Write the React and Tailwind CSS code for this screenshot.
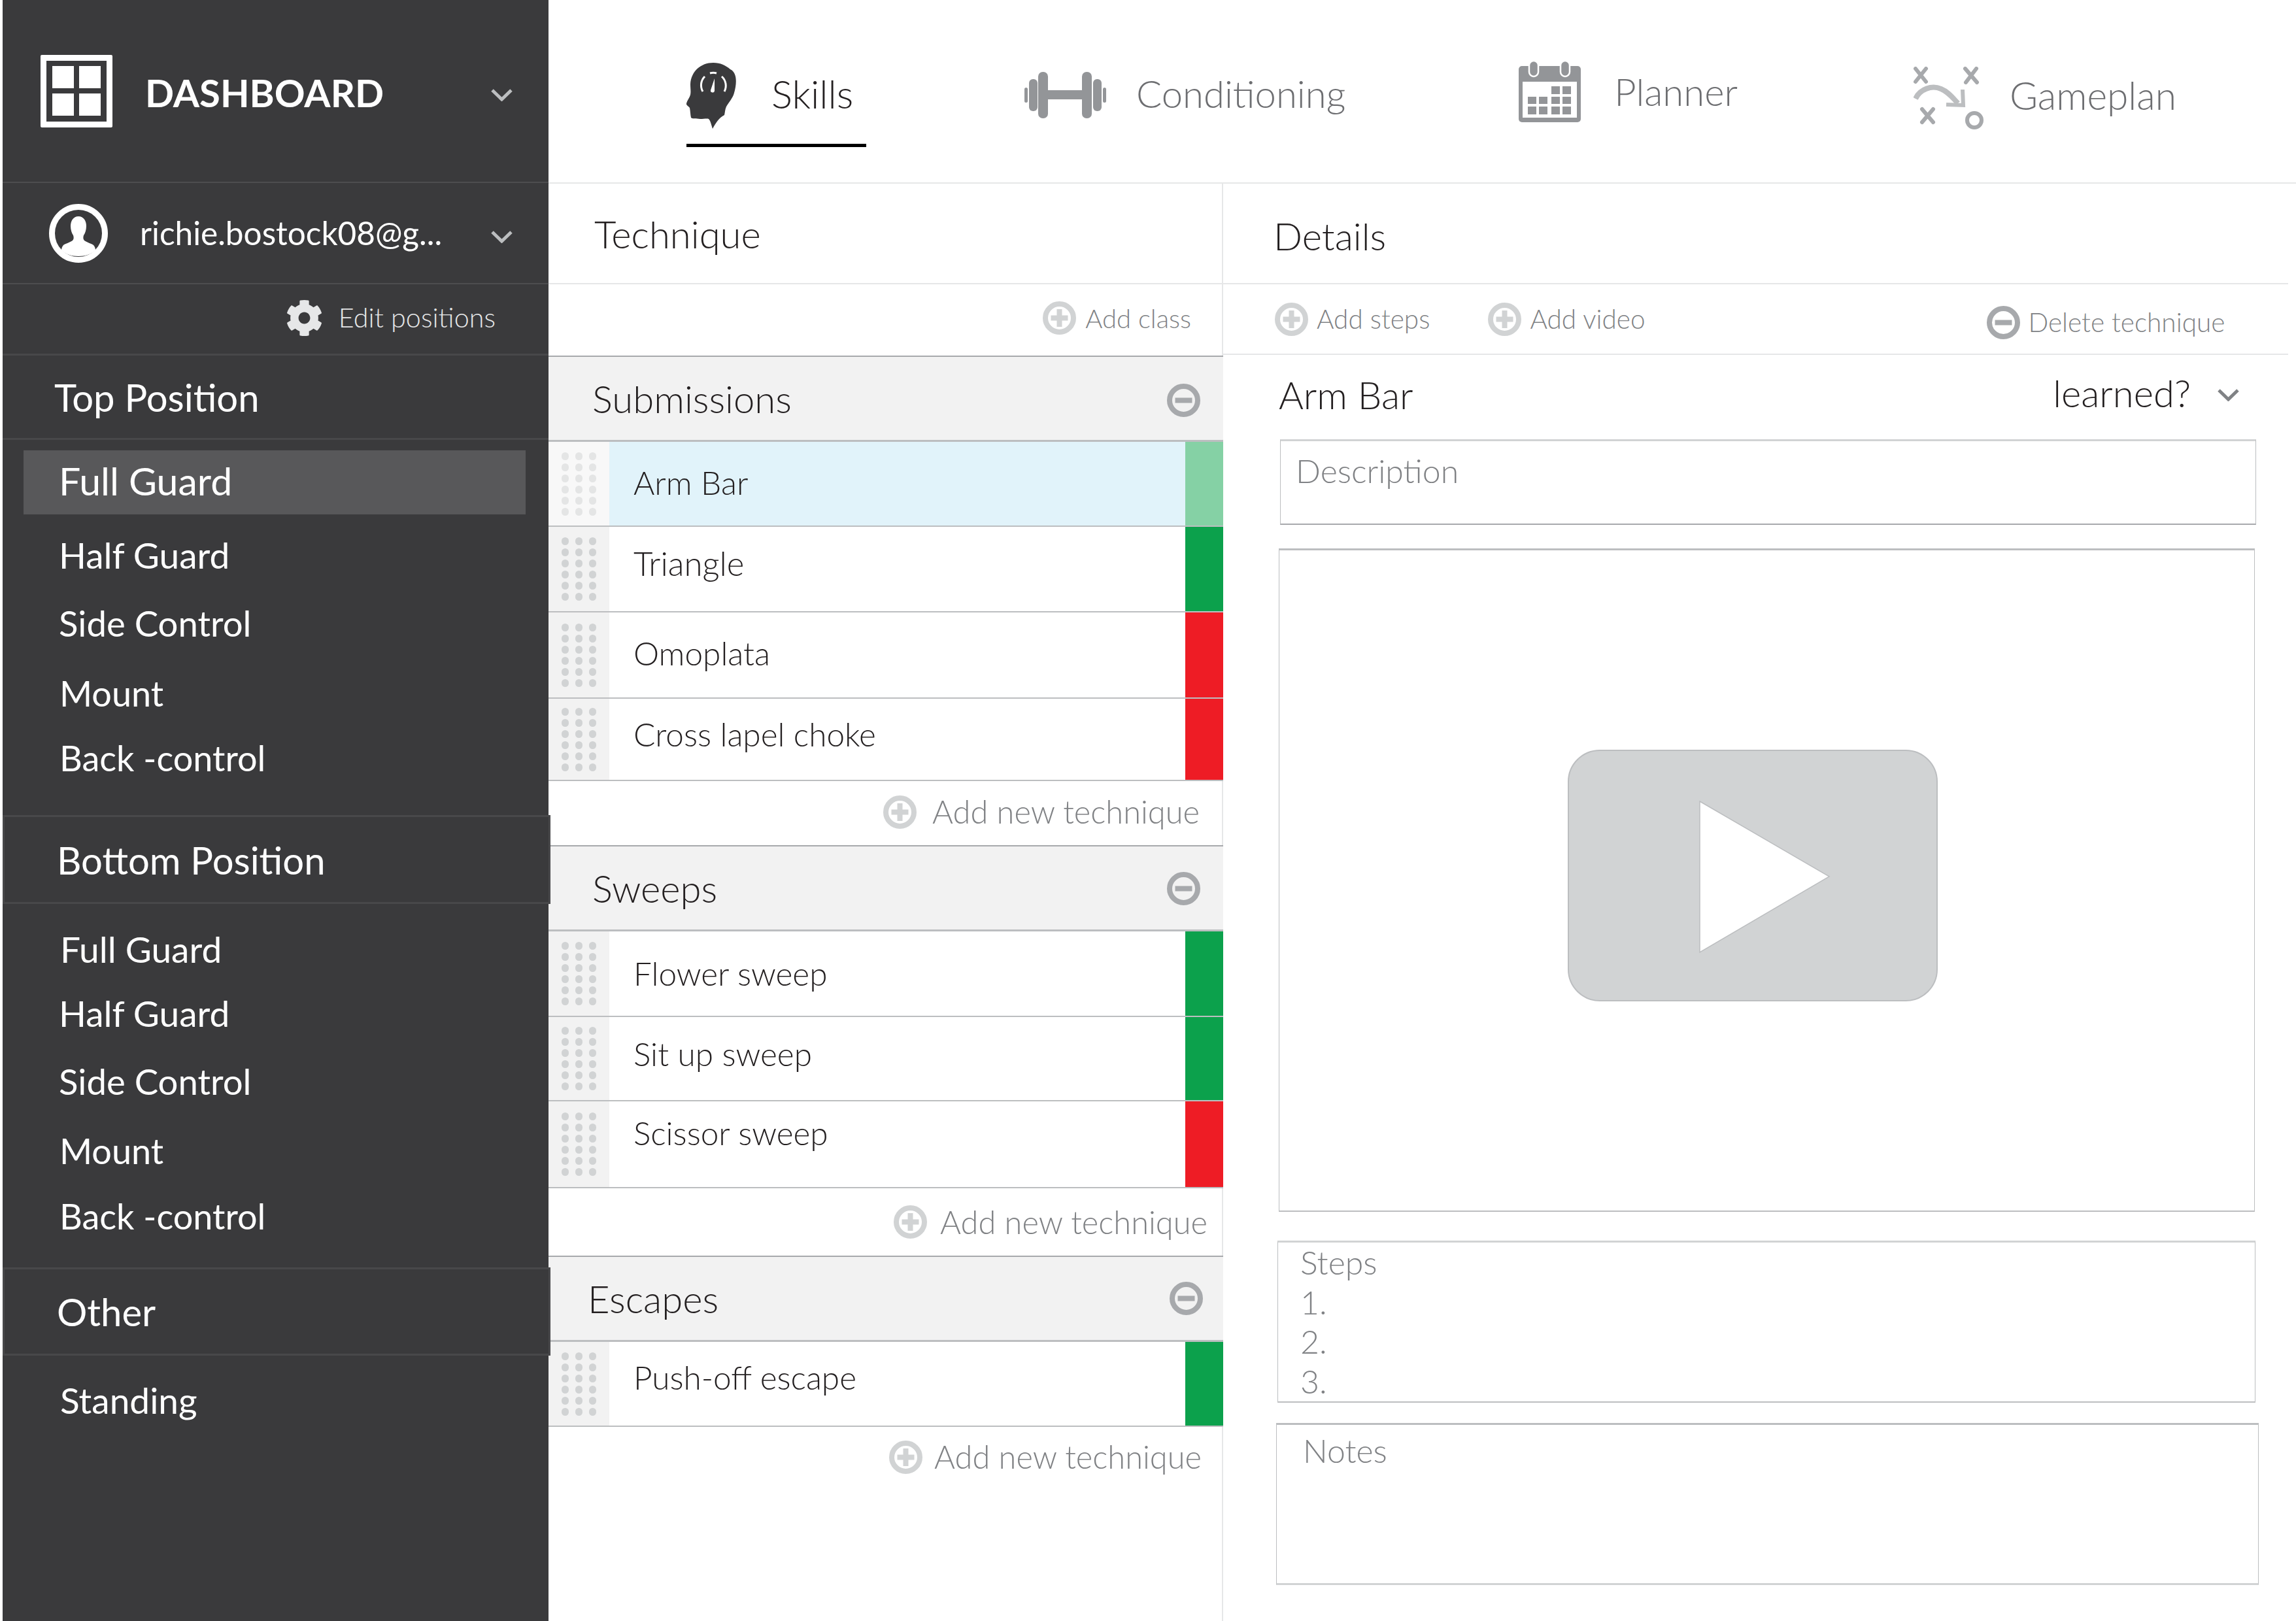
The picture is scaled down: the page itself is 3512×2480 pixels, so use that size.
import { FaCog } from 'react-icons/fa'

const topItems = [
  { label: 'Full Guard', cls: 'mt-[16px] h-[98px] ml-[32px] mr-[35px] pl-[54px] pb-[3px] bg-[#58585a] text-[59px]' },
  { label: 'Half Guard', cls: 'mt-[17px] h-[90px] pl-[86px] text-[55px]' },
  { label: 'Side Control', cls: 'mt-[15px] h-[90px] pl-[86px] text-[54.5px]' },
  { label: 'Mount', cls: 'mt-[16px] h-[90px] pl-[87px] text-[54px]' },
  { label: 'Back -control', cls: 'mt-[9px] h-[90px] pl-[87px] text-[54px]' },
]

const bottomItems = [
  { label: 'Full Guard', cls: 'mt-[24px] h-[90px] pl-[88px] text-[55px]' },
  { label: 'Half Guard', cls: 'mt-[8px] h-[90px] pl-[86px] text-[55px]' },
  { label: 'Side Control', cls: 'mt-[15px] h-[90px] pl-[86px] text-[54.5px]' },
  { label: 'Mount', cls: 'mt-[15px] h-[90px] pl-[87px] text-[54px]' },
  { label: 'Back -control', cls: 'mt-[10px] h-[90px] pl-[87px] text-[54px]' },
]

const GREEN = 'bg-[#0ca14c]'
const RED = 'bg-[#ee1c25]'

const sections = [
  {
    title: 'Submissions',
    headCls: 'pl-[67px] pr-[35px]',
    minusCls: 'mt-[6px]',
    addCls: 'h-[98px] pr-[36px] pb-[4px]',
    addGap: 'ml-[24px]',
    rows: [
      { label: 'Arm Bar', h: 'h-[130px]', text: 'pb-[4px]', bar: 'bg-[#85d1a5]', active: true },
      { label: 'Triangle', h: 'h-[131px]', text: 'pb-[16px] text-[51px]', bar: GREEN },
      { label: 'Omoplata', h: 'h-[132px]', text: 'pb-[6px]', bar: RED },
      { label: 'Cross lapel choke', h: 'h-[126px]', text: 'pb-[16px]', bar: RED },
    ],
  },
  {
    title: 'Sweeps',
    headCls: 'pl-[67px] pr-[35px]',
    minusCls: 'mt-[2px]',
    addCls: 'h-[103px] pr-[24px]',
    addGap: 'ml-[20px]',
    rows: [
      { label: 'Flower sweep', h: 'h-[131px]', text: 'pb-[0px]', bar: GREEN },
      { label: 'Sit up sweep', h: 'h-[129px]', text: 'pb-[14px]', bar: GREEN },
      { label: 'Scissor sweep', h: 'h-[133px]', text: 'pb-[34px]', bar: RED },
    ],
  },
  {
    title: 'Escapes',
    headCls: 'pl-[60px] pr-[31px]',
    minusCls: '',
    addCls: 'h-[98px] pr-[33px] pb-[6px]',
    addGap: 'ml-[18px]',
    rows: [{ label: 'Push-off escape', h: 'h-[130px]', text: 'pb-[20px]', bar: GREEN }],
  },
]

function Chevron({ className = '', color = '#bcbec0' }) {
  return (
    <svg viewBox="0 0 33 20" className={`h-[20px] w-[33px] ${className}`} fill="none">
      <path d="M2 3 L16.5 17 L31 3" stroke={color} strokeWidth="5" />
    </svg>
  )
}

function DashIcon() {
  return (
    <svg viewBox="0 0 110 111" className="h-[111px] w-[110px] shrink-0">
      <rect x="0" y="0" width="110" height="111" rx="2" fill="#fff" />
      <rect x="9" y="9" width="92" height="93" fill="#3a3a3c" />
      <rect x="18" y="17" width="33" height="34" fill="#fff" />
      <rect x="59" y="17" width="33" height="34" fill="#fff" />
      <rect x="18" y="59" width="33" height="34" fill="#fff" />
      <rect x="59" y="59" width="33" height="34" fill="#fff" />
    </svg>
  )
}

function UserIcon() {
  return (
    <svg viewBox="0 0 90 90" className="h-[90px] w-[90px] shrink-0">
      <circle cx="45" cy="45" r="40.5" fill="none" stroke="#fff" strokeWidth="9" />
      <path
        d="M45 19c-8 0-12 7-12 15 0 6 2 11 4 14 1 3 1 6-1 8-4 3-12 5-14 7-2 2-3 5-3 8 7 6 15 9 26 9s19-3 26-9c0-3-1-6-3-8-2-2-10-4-14-7-2-2-2-5-1-8 2-3 4-8 4-14 0-8-4-15-12-15z"
        fill="#fff"
      />
    </svg>
  )
}

function HeadIcon() {
  return (
    <svg viewBox="0 0 82 101" className="h-[101px] w-[82px] shrink-0">
      <path
        d="M41 0C22 0 7 13 6 33c0 6 1 11 0 16-1 4-5 9-6 13-1 3 3 4 5 7 1 5 1 11 2 15 1 2 8 1 14 2 5 0 11-1 13 0 3 3 4 9 6 15 4-8 10-17 18-21 1-4 1-9 3-13 4-7 10-13 12-21 4-14 5-31-6-36C60 4 52 0 41 0z"
        fill="#3a3a3c"
      />
      <path d="M25 44a19 19 0 0 1 3 -23" fill="none" stroke="#fff" strokeWidth="3" />
      <path d="M36 16a19 19 0 0 1 10 0" fill="none" stroke="#fff" strokeWidth="3" />
      <path d="M54 21a19 19 0 0 1 4 23" fill="none" stroke="#fff" strokeWidth="3" />
      <path d="M43 24 L37 42 A3 3 0 0 0 43 43 Z" fill="#fff" />
    </svg>
  )
}

function DumbbellIcon() {
  return (
    <svg viewBox="0 0 125 71" className="h-[71px] w-[125px] shrink-0" fill="#939598">
      <rect x="0" y="24" width="5" height="23" rx="2.5" />
      <rect x="7" y="11" width="13" height="49" rx="6" />
      <rect x="21" y="0" width="15" height="71" rx="7" />
      <rect x="35" y="28" width="54" height="14" />
      <rect x="88" y="0" width="15" height="71" rx="7" />
      <rect x="105" y="11" width="13" height="49" rx="6" />
      <rect x="120" y="24" width="5" height="23" rx="2.5" />
    </svg>
  )
}

function CalendarIcon() {
  const row1 = [50, 67]
  const rows = [14, 31, 50, 67]
  return (
    <svg viewBox="0 0 95 94" className="h-[94px] w-[95px] shrink-0">
      <rect x="0" y="8" width="95" height="86" rx="5" fill="#939598" />
      <rect x="6" y="32" width="83" height="55" fill="#fff" />
      <rect x="16" y="0" width="14" height="24" rx="7" fill="#939598" stroke="#fff" strokeWidth="2.5" />
      <rect x="64" y="0" width="14" height="24" rx="7" fill="#939598" stroke="#fff" strokeWidth="2.5" />
      {row1.map((x) => (
        <rect key={x} x={x} y="39" width="13" height="12" fill="#939598" />
      ))}
      {rows.map((x) => (
        <rect key={`a${x}`} x={x} y="55" width="13" height="11" fill="#939598" />
      ))}
      {rows.map((x) => (
        <rect key={`b${x}`} x={x} y="70" width="13" height="12" fill="#939598" />
      ))}
    </svg>
  )
}

function GameplanIcon() {
  return (
    <svg viewBox="0 0 108 98" className="h-[98px] w-[108px] shrink-0" fill="none">
      <g stroke="#a7a9ac" strokeWidth="6" strokeLinecap="round">
        <path d="M3 3 L19 23 M19 3 L3 23" />
        <path d="M80 24 L96 3 M79 3 L97 24" />
        <path d="M13 85 L30 65 M13 65 L30 85" />
      </g>
      <circle cx="93" cy="82" r="11" stroke="#a7a9ac" strokeWidth="6" />
      <path d="M3 49 C10 34 28 28 42 34 C54 39 60 48 68 56" stroke="#bcbec0" strokeWidth="8" />
      <path d="M50 58 L76 59 L75 35" stroke="#bcbec0" strokeWidth="6" />
    </svg>
  )
}

function PlusCircle({ className = 'h-[51px] w-[51px]' }) {
  return (
    <svg viewBox="0 0 51 51" className={`shrink-0 ${className}`}>
      <circle cx="25.5" cy="25.5" r="21.5" fill="none" stroke="#d1d3d4" strokeWidth="8" />
      <path d="M21.5 12h8v9.5h9v8h-9v9.5h-8v-9.5h-9v-8h9z" fill="#d1d3d4" />
    </svg>
  )
}

function MinusCircle({ className = 'h-[51px] w-[51px]' }) {
  return (
    <svg viewBox="0 0 51 51" className={`shrink-0 ${className}`}>
      <circle cx="25.5" cy="25.5" r="21.5" fill="none" stroke="#a7a9ac" strokeWidth="8" />
      <rect x="12.5" y="21.5" width="26" height="8" fill="#a7a9ac" />
    </svg>
  )
}

function Dots({ faded }) {
  return (
    <div className={`grid grid-cols-3 gap-x-[10px] gap-y-[5px] ${faded ? 'opacity-50' : ''}`}>
      {Array.from({ length: 18 }).map((_, i) => (
        <span key={i} className="h-[12px] w-[11px] rounded-full bg-[#d1d3d4]" />
      ))}
    </div>
  )
}

function TechniqueRow({ row }) {
  return (
    <div className={`flex border-b-2 border-[#bcbec0] ${row.h} ${row.active ? 'bg-[#e1f3fa]' : 'bg-white'}`}>
      <div className={`flex w-[93px] shrink-0 items-center justify-center ${row.active ? 'bg-[#f8f8f8]' : 'bg-[#f2f2f2]'}`}>
        <Dots faded={row.active} />
      </div>
      <div className={`flex flex-1 items-center pl-[37px] text-[49.5px] font-light text-[#231f20] ${row.text}`}>
        {row.label}
      </div>
      <div className={`w-[58px] shrink-0 ${row.bar}`} />
    </div>
  )
}

function Section({ section }) {
  return (
    <div className="-mr-[2px]">
      <div className={`flex h-[132px] items-center justify-between border-t-2 border-b-[3px] border-t-[#a7a9ac] border-b-[#bcbec0] bg-[#f2f2f2] ${section.headCls}`}>
        <span className="text-[58px] font-light text-[#231f20]">{section.title}</span>
        <MinusCircle className={`h-[51px] w-[51px] ${section.minusCls}`} />
      </div>
      {section.rows.map((row) => (
        <TechniqueRow key={row.label} row={row} />
      ))}
      <div className={`flex items-center justify-end ${section.addCls}`}>
        <PlusCircle />
        <span className={`text-[48.8px] font-light text-[#808285] ${section.addGap}`}>Add new technique</span>
      </div>
    </div>
  )
}

function SideList({ items }) {
  return (
    <div>
      {items.map((item) => (
        <div key={item.label} className={`flex items-center text-white ${item.cls}`}>
          {item.label}
        </div>
      ))}
    </div>
  )
}

function Sidebar() {
  return (
    <aside className="h-full w-[835px] shrink-0 bg-[#3a3a3c]">
      <div className="flex h-[280px] items-center border-b-2 border-[#4d4d4f] pr-[55px] pl-[58px]">
        <DashIcon />
        <span className="mt-[4px] ml-[50px] text-[58px] font-bold text-white">DASHBOARD</span>
        <Chevron className="mt-[12px] ml-auto" />
      </div>
      <div className="flex h-[155px] items-center border-b-2 border-[#4d4d4f] pr-[55px] pl-[71px]">
        <UserIcon />
        <span className="ml-[49px] text-[49.5px] text-white">richie.bostock08@g...</span>
        <Chevron className="mt-[10px] ml-auto" />
      </div>
      <div className="flex h-[106px] items-center justify-end pr-[81px] pb-[4px]">
        <FaCog className="mr-[24px] h-[57px] w-[57px] text-[#e6e7e8]" />
        <span className="text-[41.3px] font-light text-[#e6e7e8]">Edit positions</span>
      </div>
      <div className="flex h-[132px] items-center border-y-[3px] border-[#48484a] pl-[79px] text-[58px] text-white">
        Top Position
      </div>
      <SideList items={topItems} />
      <div className="relative z-10 mt-[43px] flex h-[136px] w-[838px] items-center border-[3px] border-[#48484a] bg-[#3a3a3c] pl-[80px] text-[58px] text-white">
        Bottom Position
      </div>
      <SideList items={bottomItems} />
      <div className="relative z-10 mt-[34px] flex h-[135px] w-[838px] items-center border-[3px] border-[#48484a] bg-[#3a3a3c] pl-[80px] text-[58px] text-white">
        Other
      </div>
      <SideList items={[{ label: 'Standing', cls: 'mt-[23px] h-[90px] pl-[88px] text-[55px]' }]} />
    </aside>
  )
}

function TopNav() {
  return (
    <nav className="flex h-[281px] shrink-0 border-b-2 border-[#e6e7e8] pl-[211px]">
      <div className="w-[275px]">
        <div className="mt-[96px] flex h-[101px] items-center">
          <HeadIcon />
          <span className="mb-[8px] ml-[48px] text-[60px] font-light text-[#231f20]">Skills</span>
        </div>
        <div className="mt-[23px] h-[5px] bg-black" />
      </div>
      <div className="mt-[110px] ml-[242px] flex h-[71px] items-center">
        <DumbbellIcon />
        <span className="mb-[6px] ml-[46px] text-[58px] font-light text-[#6d6e71]">Conditioning</span>
      </div>
      <div className="mt-[93px] ml-[265px] flex h-[94px] items-center">
        <CalendarIcon />
        <span className="mb-[2px] ml-[51px] text-[58px] font-light text-[#6d6e71]">Planner</span>
      </div>
      <div className="mt-[102px] ml-[269px] flex h-[98px] items-center">
        <GameplanIcon />
        <span className="mb-[10px] ml-[39px] text-[58.7px] font-light text-[#6d6e71]">Gameplan</span>
      </div>
    </nav>
  )
}

function TechniqueColumn() {
  return (
    <section className="w-[1032px] shrink-0 border-r-2 border-[#e6e7e8]">
      <div className="flex h-[154px] items-center border-b-2 border-[#e6e7e8] pl-[70px] text-[58px] font-light text-[#231f20]">
        Technique
      </div>
      <div className="flex h-[109px] items-center justify-end pr-[47px] pb-[6px]">
        <PlusCircle />
        <span className="ml-[14px] text-[40px] font-light text-[#808285]">Add class</span>
      </div>
      {sections.map((section) => (
        <Section key={section.title} section={section} />
      ))}
    </section>
  )
}

function DetailsColumn() {
  return (
    <section className="w-[1629px] shrink-0">
      <div className="flex h-[154px] items-center border-b-2 border-[#e6e7e8] pt-[6px] pl-[77px] text-[58px] font-light text-[#231f20]">
        Details
      </div>
      <div className="flex h-[108px] items-center border-b-2 border-[#e6e7e8] pl-[79px] text-[40.5px] font-light text-[#808285]">
        <PlusCircle />
        <span className="ml-[13px]">Add steps</span>
        <PlusCircle className="ml-[89px] h-[51px] w-[51px]" />
        <span className="ml-[13px]">Add video</span>
        <MinusCircle className="mt-[10px] ml-[522px] h-[51px] w-[51px]" />
        <span className="mt-[10px] ml-[13px]">Delete technique</span>
      </div>
      <div className="flex h-[129px] items-center justify-between pr-[75px] pb-[8px] pl-[85px] text-[58px] font-light text-[#231f20]">
        <span>Arm Bar</span>
        <div className="flex items-center">
          <span className="mb-[6px]">learned?</span>
          <Chevron className="ml-[41px]" color="#808285" />
        </div>
      </div>
      <div className="ml-[87px] h-[131px] w-[1493px] border border-t-[3px] border-b-2 border-[#bcbec0] border-t-[#d1d3d4] border-b-[#a7a9ac] pt-[8px] pl-[23px] text-[50px] font-light text-[#808285]">
        Description
      </div>
      <div className="mt-[36px] ml-[85px] flex h-[1015px] w-[1493px] items-start justify-center border border-t-[3px] border-b-2 border-[#bcbec0] border-t-[#bcbec0] pt-[305px]">
        <svg viewBox="0 0 566 385" className="-ml-[44px] h-[385px] w-[566px]">
          <rect x="1" y="1" width="564" height="383" rx="48" fill="#d1d3d4" stroke="#bcbec0" strokeWidth="2" />
          <path d="M202 79 L400 194 L202 310 Z" fill="#fff" stroke="#bcbec0" strokeWidth="1.5" />
        </svg>
      </div>
      <div className="mt-[44px] ml-[83px] h-[248px] w-[1496px] border border-t-[3px] border-b-2 border-[#bcbec0] border-t-[#d1d3d4] pl-[34px] text-[50px] leading-[60.5px] font-light text-[#808285]">
        <div>Steps</div>
        <div>1.</div>
        <div>2.</div>
        <div>3.</div>
      </div>
      <div className="mt-[31px] ml-[81px] h-[248px] w-[1503px] border border-t-[3px] border-b-[3px] border-[#bcbec0] border-b-[#d1d3d4] pt-[2px] pl-[40px] text-[50px] font-light text-[#808285]">
        Notes
      </div>
    </section>
  )
}

export default function App() {
  return (
    <div className="flex h-[2480px] w-[3512px] overflow-hidden bg-white pl-[4px] font-['Lato',sans-serif]">
      <Sidebar />
      <main className="flex w-[2673px] flex-col">
        <TopNav />
        <div className="flex flex-1">
          <TechniqueColumn />
          <DetailsColumn />
        </div>
      </main>
    </div>
  )
}
